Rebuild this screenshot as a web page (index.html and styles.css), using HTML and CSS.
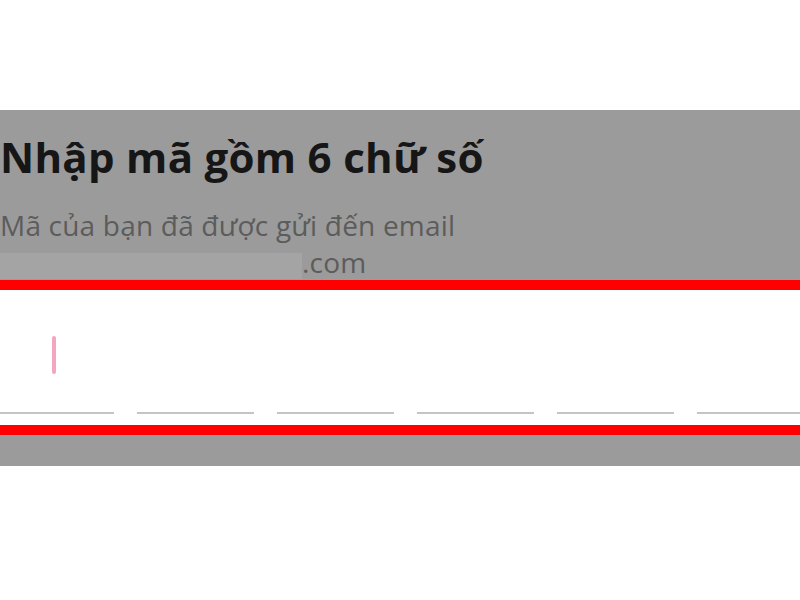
FILE: index.html
```html
<!DOCTYPE html>
<html lang="vi">
<head>
<meta charset="utf-8">
<link rel="stylesheet" href="styles.css">
</head>
<body>
<div class="top"></div>
<section class="head">
  <h1 class="title">Nhập mã gồm 6 chữ số</h1>
  <p class="sub">Mã của bạn đã được gửi đến email</p>
  <p class="sub line2"><span class="blur"></span>.com</p>
</section>
<div class="redbar"></div>
<section class="code">
  <div class="cursor-row"><span class="cursor"></span></div>
  <div class="slots">
    <span class="slot"></span>
    <span class="slot"></span>
    <span class="slot"></span>
    <span class="slot"></span>
    <span class="slot"></span>
    <span class="slot"></span>
  </div>
</section>
<div class="redbar"></div>
<div class="foot"></div>
</body>
</html>
```
FILE: styles.css
```css
* { box-sizing: border-box; }
html, body { margin: 0; padding: 0; background: #ffffff; }
body { width: 800px; height: 600px; overflow: hidden; font-family: "Open Sans", "Noto Sans", sans-serif; }
.top { height: 110px; background: #ffffff; }
.head { height: 170px; background: #9b9b9b; padding-top: 22px; }
.title { margin: 0; font-size: 42px; line-height: 50px; font-weight: 700; color: #161616; white-space: nowrap; letter-spacing: 0.3px; }
.sub { margin: 0; font-size: 28px; line-height: 37px; color: #5c5c5c; font-weight: 400; white-space: nowrap; letter-spacing: 0.2px; }
.title + .sub { margin-top: 25px; }
.line2 { display: flex; align-items: flex-start; }
.blur { display: block; width: 302px; height: 26px; background: #a4a4a4; margin-top: 9px; flex: none; }
.redbar { height: 10px; background: #fe0000; }
.code { height: 135px; background: #ffffff; display: flex; flex-direction: column; }
.cursor-row { height: 122px; padding: 46px 0 0 52px; }
.cursor { display: block; width: 4px; height: 38px; border-radius: 2px; background: #f2a7bf; }
.slots { display: flex; gap: 23px; margin-left: -3px; }
.slot { display: block; width: 117px; height: 2px; background: #c4c4c4; flex: none; }
.foot { height: 31px; background: #9b9b9b; }
```
